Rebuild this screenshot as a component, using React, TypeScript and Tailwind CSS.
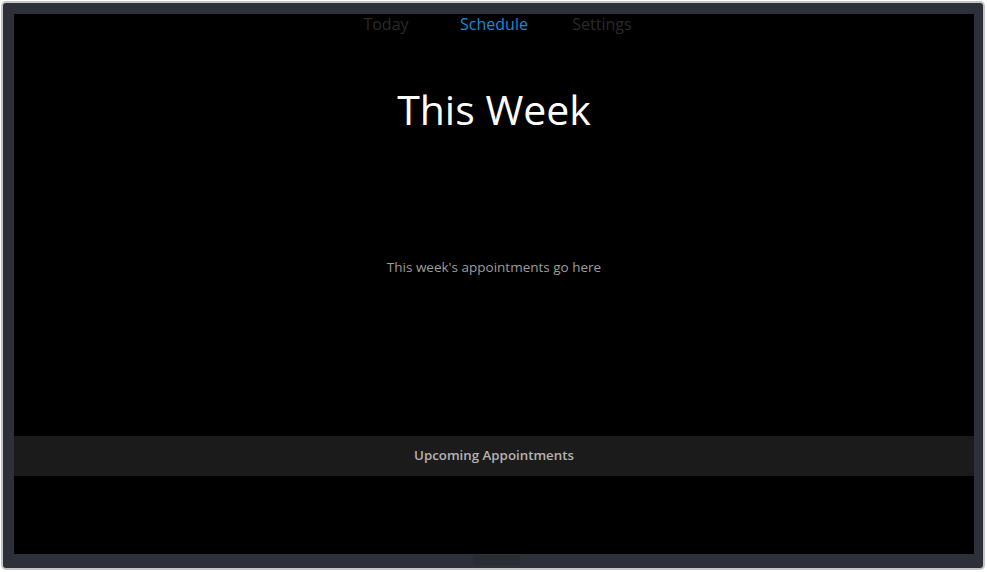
import React from 'react';

const tabs = [
  { label: 'Today', active: false },
  { label: 'Schedule', active: true },
  { label: 'Settings', active: false },
];

export default function App(): React.ReactElement {
  return (
    <div
      className="w-[987px] h-[572px] bg-white pl-px pt-px overflow-hidden"
      style={{ fontFamily: '"Open Sans", "Noto Sans", sans-serif' }}
    >
      {/* Device frame */}
      <div className="w-[984px] h-[569px] rounded-[5px] border-2 border-[#c4c5c7] bg-[#2e3039] pl-[11px] pt-[11px] flex flex-col">
        {/* Screen */}
        <div className="w-[960px] h-[540px] bg-black flex flex-col items-center">
          <nav className="flex h-[20px] items-end">
            {tabs.map((t) => (
              <div
                key={t.label}
                className={
                  t.active
                    ? 'w-[108px] text-center text-[16px] leading-[20px] font-medium text-[#1a8ad4]'
                    : 'w-[108px] text-center text-[16px] leading-[20px] font-medium text-[#2a2a2a]'
                }
              >
                {t.label}
              </div>
            ))}
          </nav>

          <h1 className="mt-[50px] text-[41px] leading-[50px] text-white">This Week</h1>

          <div className="flex-1 w-full flex flex-col">
            <div className="h-[302px] flex items-center justify-center pb-[36px]">
              <p className="text-[13.5px] text-[#9c9c9c]">This week's appointments go here</p>
            </div>
            <div className="h-[40px] w-full bg-[#1b1b1b] flex items-center justify-center">
              <span className="text-[13.3px] font-semibold text-[#b3b3b3]">Upcoming Appointments</span>
            </div>
          </div>
        </div>
        {/* Bottom bezel marker */}
        <div className="mt-px ml-[459px] w-[47px] h-[10px] bg-[#2a2c34]" />
      </div>
    </div>
  );
}
